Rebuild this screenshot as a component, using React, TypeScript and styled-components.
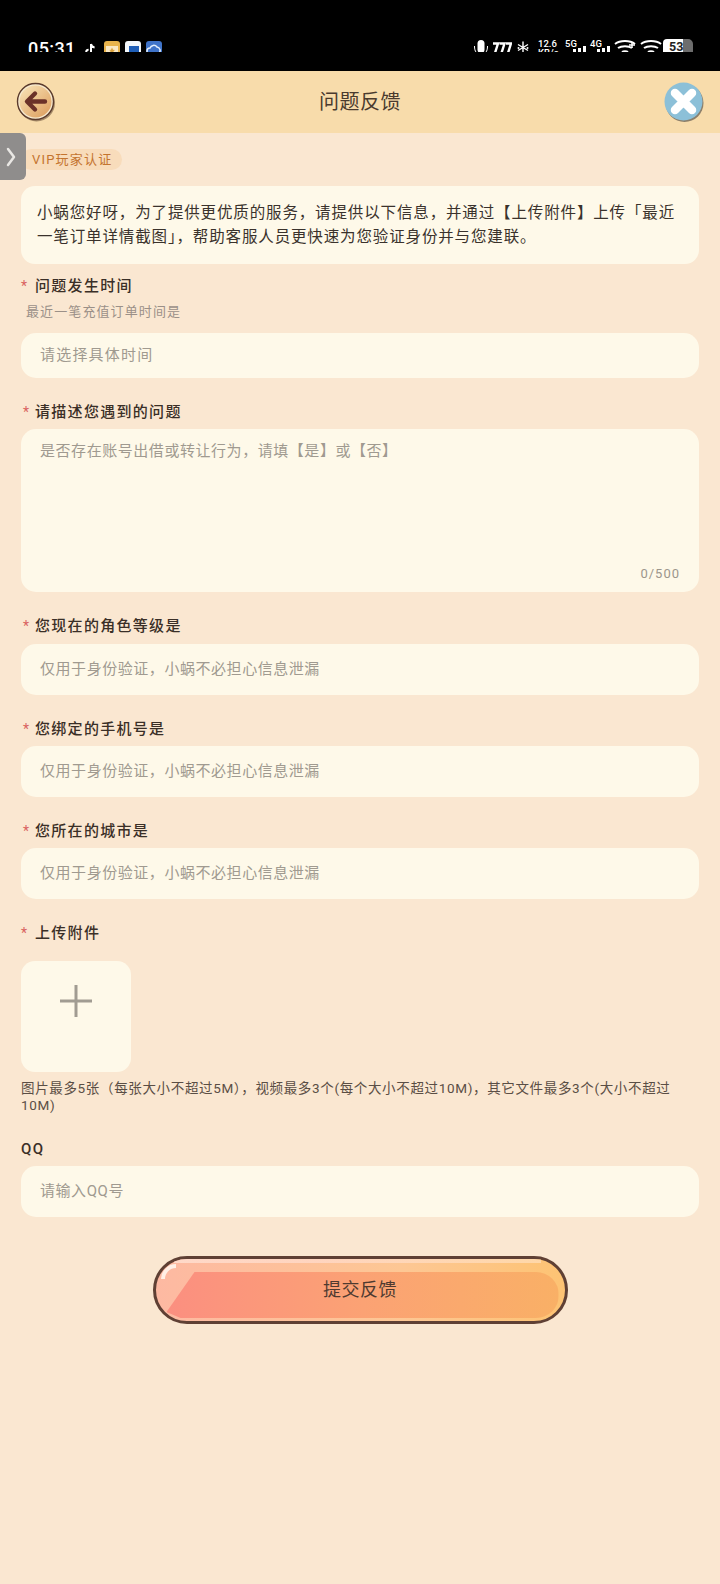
import React from "react";
import styled, { createGlobalStyle } from "styled-components";

const GlobalStyle = createGlobalStyle`
  html, body {
    margin: 0;
    padding: 0;
    background: #fae7d1;
  }
  * {
    box-sizing: border-box;
  }
`;

const FONT = `Roboto, "Noto Sans CJK SC", sans-serif`;

const Page = styled.div`
  position: relative;
  width: 720px;
  height: 1584px;
  overflow: hidden;
  background: #fae7d1;
  font-family: ${FONT};
`;

const StatusBar = styled.div`
  display: flex;
  align-items: flex-start;
  justify-content: space-between;
  height: 71px;
  padding: 39px 27px 0 28px;
  background: #000;
  color: #fff;
`;

const StatusClip = styled.div`
  display: flex;
  align-items: flex-start;
  height: 13px;
  overflow: hidden;
`;

const Clock = styled.span`
  margin-top: 1px;
  margin-right: 8px;
  font-size: 18px;
  line-height: 17px;
  font-weight: 500;
  letter-spacing: 0.4px;
`;

const AppIcons = styled.div`
  display: flex;
  gap: 5px;
  margin-top: 2px;
`;

const TikTokSlot = styled.div`
  width: 15px;
  margin-top: 1px;
`;

const Glyph = styled.div<{ $left?: number; $width: number }>`
  position: relative;
  flex: none;
  width: ${(p) => p.$width}px;
  height: 13px;
  margin-left: ${(p) => p.$left ?? 4}px;
`;

const TinyText = styled.div`
  color: #fff;
  font-size: 9.5px;
  line-height: 9px;
  font-weight: 500;
`;

const Bars = styled.div`
  position: absolute;
  right: 0;
  bottom: 0;
  line-height: 0;
`;

const Battery = styled.div`
  width: 30px;
  height: 13px;
  margin-left: 2px;
  padding-left: 6px;
  border-radius: 4px 5px 0 0;
  background-image: linear-gradient(90deg, #fff 0 66%, #6d6d6d 66% 100%);
  color: #222;
  font-size: 12.5px;
  font-weight: 700;
  line-height: 15px;
`;

const Header = styled.header`
  display: flex;
  align-items: center;
  justify-content: space-between;
  height: 62px;
  padding: 0 16px;
  background: #f8dcab;
`;

const Title = styled.h1`
  margin: 0;
  color: #4a3a2e;
  font-size: 20px;
  line-height: 26px;
  font-weight: 400;
  letter-spacing: 0.5px;
`;

const SideTab = styled.div`
  position: absolute;
  left: 0;
  top: 133px;
  display: flex;
  align-items: center;
  width: 26px;
  height: 47px;
  padding-left: 5px;
  border-radius: 0 6px 6px 0;
  background: #8f8d8c;
`;

const Content = styled.main`
  display: flex;
  flex-direction: column;
  padding: 16px 21px 0;
`;

const VipTag = styled.div`
  align-self: flex-start;
  height: 21px;
  padding: 0 10px 0 11px;
  border-radius: 11px;
  background: #f8dcbb;
  color: #c4742f;
  font-size: 13px;
  line-height: 21px;
  letter-spacing: 1.2px;
`;

const IntroCard = styled.p`
  height: 78px;
  margin: 16px 0 0;
  padding: 16px 16px 0;
  border-radius: 14px;
  background: #fef9e9;
  color: #3a322c;
  font-size: 15.5px;
  line-height: 23.5px;
  letter-spacing: 0.86px;
`;

const Label = styled.div<{ $top: number }>`
  display: flex;
  align-items: center;
  height: 20px;
  margin-top: ${(p) => p.$top}px;
  color: #3a2f27;
  font-size: 15px;
  line-height: 20px;
  font-weight: 500;
  letter-spacing: 1.3px;
`;

const Star = styled.span<{ $wide?: boolean }>`
  width: 14px;
  margin-left: ${(p) => (p.$wide ? 0 : 2)}px;
  margin-right: ${(p) => (p.$wide ? 0 : -2)}px;
  color: #d9625f;
  font-size: 14px;
  font-weight: 400;
`;

const Hint = styled.div`
  margin: 7px 0 0 5px;
  color: #9b9088;
  font-size: 13px;
  line-height: 18px;
  letter-spacing: 1.1px;
`;

const Field = styled.div<{ $height: number; $top: number; $tracking?: number }>`
  position: relative;
  height: ${(p) => p.$height}px;
  margin-top: ${(p) => p.$top}px;
  padding: 0 19px;
  border-radius: 15px;
  background: #fef9e9;
  color: #a09a90;
  font-size: 15px;
  line-height: ${(p) => p.$height}px;
  letter-spacing: ${(p) => p.$tracking ?? 0.55}px;
`;

const AreaText = styled.div`
  padding-top: 10px;
  line-height: 24px;
`;

const Counter = styled.span`
  position: absolute;
  right: 19px;
  bottom: 9px;
  color: #9c968c;
  font-size: 13px;
  line-height: 18px;
  letter-spacing: 1px;
`;

const UploadBox = styled.div`
  display: flex;
  justify-content: center;
  width: 110px;
  height: 111px;
  margin-top: 18px;
  padding-top: 23px;
  border-radius: 14px;
  background: #fef9e9;
`;

const UploadHelp = styled.p`
  margin: 8px 0 0;
  color: #5a4e45;
  font-size: 13.5px;
  line-height: 17px;
  letter-spacing: 0.65px;
`;

const SubmitWrap = styled.div`
  display: flex;
  justify-content: center;
  margin-top: 39px;
`;

const SubmitButton = styled.button`
  position: relative;
  width: 415px;
  height: 68px;
  padding: 0;
  overflow: hidden;
  border: 3px solid #5f4034;
  border-radius: 34px;
  background: linear-gradient(90deg, #fdb9a2 0%, #fdc794 60%, #fdc373 100%);
  color: #4f3a30;
  font-family: ${FONT};
  font-size: 18px;
  letter-spacing: 0.5px;
`;

const ButtonFill = styled.span`
  position: absolute;
  left: 11px;
  right: 6px;
  top: 13px;
  bottom: 3px;
  border-radius: 0 26px 26px 0;
  clip-path: polygon(28px 0, 100% 0, 100% 100%, 14px 100%, 0 40px);
  background: linear-gradient(90deg, #fb8f80 0%, #fba274 50%, #f9b066 100%);
`;

const ButtonSheen = styled.span`
  position: absolute;
  left: 18px;
  right: 24px;
  top: 0;
  height: 4px;
  background: linear-gradient(90deg, #ffe0d2, #ffd9c8 40%, #ffdcb4);
  opacity: 0.8;
`;

const ButtonGloss = styled.span`
  position: absolute;
  left: 5px;
  top: 5px;
  width: 30px;
  height: 30px;
  border: 4px solid transparent;
  border-top-color: #fff0e6;
  border-radius: 50%;
  transform: rotate(-45deg);
`;

const ButtonLabel = styled.span`
  position: relative;
  line-height: 62px;
`;

const GoldApp = () => (
  <svg width="16" height="16" viewBox="0 0 16 16">
    <rect width="16" height="16" rx="3" fill="#e9b44c" />
    <rect x="2" y="5" width="12" height="11" fill="#fbe9c4" />
    <path d="M8 6.500l1 2.200 2 .2-1.500 1.400.4 2L8 11l-1.900.8.400-2L5 8.900l2-.2z" fill="#d9a13c" />
  </svg>
);

const MailApp = () => (
  <svg width="16" height="16" viewBox="0 0 16 16">
    <rect width="16" height="16" rx="3" fill="#f3f7fb" />
    <rect x="4" y="5" width="10" height="7" fill="#1f5fb8" />
    <rect x="0" y="12" width="16" height="4" fill="#cfe3f5" />
  </svg>
);

const CloudApp = () => (
  <svg width="16" height="16" viewBox="0 0 16 16">
    <rect width="16" height="16" rx="3" fill="#3f73c8" />
    <path d="M4 13a3 3 0 0 1 0-6 4 4 0 0 1 7-1 3.500 3.500 0 0 1 2 6" fill="none" stroke="#e4effc" strokeWidth="1.5" />
  </svg>
);

const BackIcon = () => (
  <svg width="40" height="40" viewBox="0 0 40 40">
    <defs>
      <linearGradient id="backFill" x1="0.15" y1="0.1" x2="0.85" y2="0.9">
        <stop offset="0" stopColor="#f6dcae" />
        <stop offset="1" stopColor="#dfa466" />
      </linearGradient>
    </defs>
    <circle cx="20.5" cy="21" r="18.5" fill="#a58a68" />
    <circle cx="19.5" cy="19.5" r="18" fill="#f7ead0" stroke="#5b3b2d" strokeWidth="1.4" />
    <circle cx="19.5" cy="19.5" r="16" fill="url(#backFill)" />
    <path d="M29 19.500H11.500M19 11.500l-8 8 8 8" fill="none" stroke="#6b3128" strokeWidth="4.4" strokeLinecap="round" strokeLinejoin="round" />
  </svg>
);

const CloseIcon = () => (
  <svg width="40" height="40" viewBox="0 0 40 40">
    <circle cx="20.500" cy="21" r="19" fill="#8c7f6a" />
    <circle cx="19.500" cy="19.500" r="19" fill="#8cc0d8" />
    <path d="M11 11l17 17M28 11L11 28" stroke="#fff" strokeWidth="8.5" strokeLinecap="round" />
  </svg>
);

const Chevron = () => (
  <svg width="12" height="22" viewBox="0 0 12 22">
    <path d="M3 3l6 8-6 8" fill="none" stroke="#e9e7e4" strokeWidth="2.500" strokeLinecap="round" strokeLinejoin="round" />
  </svg>
);

const PlusIcon = () => (
  <svg width="34" height="34" viewBox="0 0 34 34">
    <path d="M17 1v32M1 17h32" stroke="#a19c92" strokeWidth="3" />
  </svg>
);

const TikTok = () => (
  <svg width="12" height="14" viewBox="0 0 12 14">
    <path d="M7 1v8.200a2.400 2.400 0 1 1-2.400-2.400M7 1c.3 2 1.600 3.200 3.600 3.400" fill="none" stroke="#fff" strokeWidth="2" />
  </svg>
);

const Wifi = ({ plus }: { plus?: boolean }) => (
  <svg width="22" height="15" viewBox="0 0 22 15">
    <path d="M1 5c5-4 15-4 20 0M4 9c3.500-2.500 10.500-2.500 14 0M8 13c1.500-1 4.500-1 6 0" fill="none" stroke="#fff" strokeWidth="2" />
    {plus && <path d="M18 3v6M15 6h6" stroke="#fff" strokeWidth="1.500" />}
  </svg>
);

const Signal = () => (
  <svg width="13" height="6" viewBox="0 0 13 6">
    <rect x="0" y="3" width="3" height="3" fill="#fff" />
    <rect x="5" y="2" width="3" height="4" fill="#fff" />
    <rect x="10" y="0" width="3" height="6" fill="#fff" />
  </svg>
);

const Mic = () => (
  <svg width="16" height="16" viewBox="0 0 16 16">
    <rect x="4.500" y="1" width="7" height="13" rx="3.500" fill="#fff" />
    <path d="M1.500 7c0 3 .6 5 1.500 6M14.500 7c0 3-.6 5-1.500 6" fill="none" stroke="#fff" strokeWidth="1" />
  </svg>
);

const Bluetooth = () => (
  <svg width="14" height="13" viewBox="0 0 14 13">
    <path d="M7 .5v12M2 3.500l10 6M12 3.500l-10 6" stroke="#fff" strokeWidth="1.400" />
    <circle cx="2.500" cy="7" r="1" fill="#fff" />
    <circle cx="11.500" cy="7" r="1" fill="#fff" />
  </svg>
);

const Speed = () => (
  <svg width="20" height="12" viewBox="0 0 20 12" style={{ marginTop: 2 }}>
    <path d="M1 1.500h5L3 11M7.500 1.500h5l-3 9.500M14 1.500h5L16 11" fill="none" stroke="#fff" strokeWidth="2.400" />
  </svg>
);

const fields = [
  { label: "您现在的角色等级是", top: 8 },
  { label: "您绑定的手机号是", top: 7 },
  { label: "您所在的城市是", top: 7 },
];

const App = () => (
  <Page>
    <GlobalStyle />
    <StatusBar>
      <StatusClip>
        <Clock>05:31</Clock>
        <AppIcons>
          <TikTokSlot>
            <TikTok />
          </TikTokSlot>
          <GoldApp />
          <MailApp />
          <CloudApp />
        </AppIcons>
      </StatusClip>
      <StatusClip>
        <Glyph $left={0} $width={16}>
          <Mic />
        </Glyph>
        <Glyph $left={3} $width={20}>
          <Speed />
        </Glyph>
        <Glyph $width={14}>
          <Bluetooth />
        </Glyph>
        <Glyph $left={8} $width={20}>
          <TinyText>12.6</TinyText>
          <TinyText>KB/s</TinyText>
        </Glyph>
        <Glyph $left={7} $width={21}>
          <TinyText>5G</TinyText>
          <Bars>
            <Signal />
          </Bars>
        </Glyph>
        <Glyph $width={20}>
          <TinyText>4G</TinyText>
          <Bars>
            <Signal />
          </Bars>
        </Glyph>
        <Glyph $width={22}>
          <Wifi plus />
        </Glyph>
        <Glyph $width={21}>
          <Wifi />
        </Glyph>
        <Battery>53</Battery>
      </StatusClip>
    </StatusBar>
    <Header>
      <BackIcon />
      <Title>问题反馈</Title>
      <CloseIcon />
    </Header>
    <SideTab>
      <Chevron />
    </SideTab>
    <Content>
      <VipTag>VIP玩家认证</VipTag>
      <IntroCard>
        小蜗您好呀，为了提供更优质的服务，请提供以下信息，并通过【上传附件】上传「最近一笔订单详情截图」，帮助客服人员更快速为您验证身份并与您建联。
      </IntroCard>
      <Label $top={12}>
        <Star $wide>*</Star>问题发生时间
      </Label>
      <Hint>最近一笔充值订单时间是</Hint>
      <Field $height={45} $top={12} $tracking={1.2}>
        请选择具体时间
      </Field>
      <Label $top={24}>
        <Star>*</Star>请描述您遇到的问题
      </Label>
      <Field $height={163} $top={7}>
        <AreaText>是否存在账号出借或转让行为，请填【是】或【否】</AreaText>
        <Counter>0/500</Counter>
      </Field>
      {fields.map((f) => (
        <React.Fragment key={f.label}>
          <Label $top={24}>
            <Star>*</Star>
            {f.label}
          </Label>
          <Field $height={51} $top={f.top}>
            仅用于身份验证，小蜗不必担心信息泄漏
          </Field>
        </React.Fragment>
      ))}
      <Label $top={24}>
        <Star $wide>*</Star>上传附件
      </Label>
      <UploadBox>
        <PlusIcon />
      </UploadBox>
      <UploadHelp>
        图片最多5张（每张大小不超过5M），视频最多3个(每个大小不超过10M)，其它文件最多3个(大小不超过10M)
      </UploadHelp>
      <Label $top={25}>QQ</Label>
      <Field $height={51} $top={7}>
        请输入QQ号
      </Field>
      <SubmitWrap>
        <SubmitButton>
          <ButtonFill />
          <ButtonSheen />
          <ButtonGloss />
          <ButtonLabel>提交反馈</ButtonLabel>
        </SubmitButton>
      </SubmitWrap>
    </Content>
  </Page>
);

export default App;
